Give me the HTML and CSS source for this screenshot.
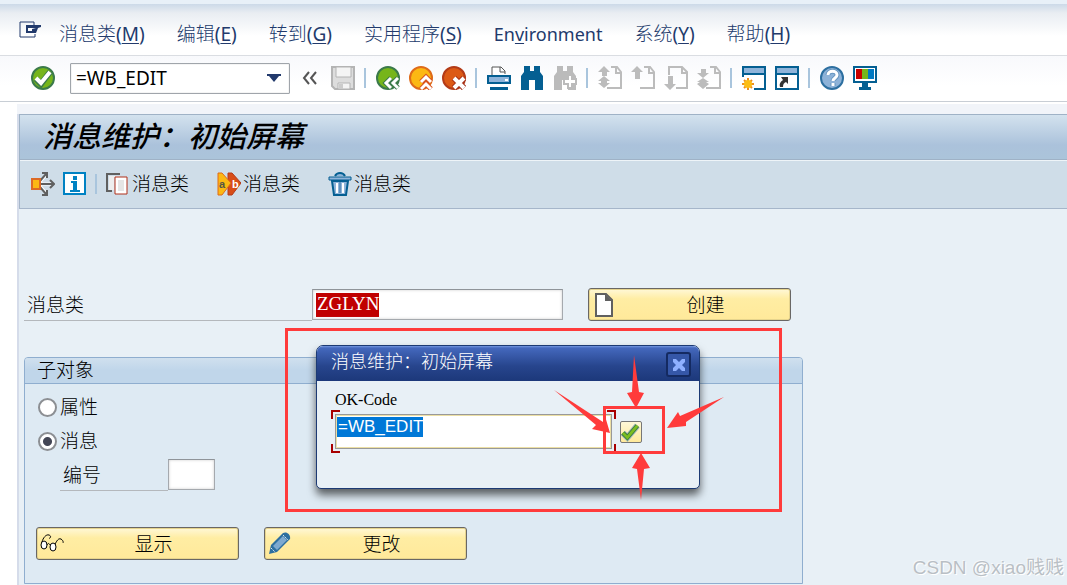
FILE: index.html
```html
<!DOCTYPE html>
<html lang="zh-CN">
<head>
	<meta charset="UTF-8">
	<title>消息维护：初始屏幕</title>
	<link rel="stylesheet" href="styles.css">
</head>
<body>
	<svg class="defs" width="0" height="0">
		<symbol id="page" viewBox="0 0 24 24"><path d="M13 1h6l4 5v16H9M18 1v6h5" fill="none" stroke="#bcbcbc" stroke-width="2"/></symbol>
		<symbol id="binoculars" viewBox="0 0 24 24"><path d="M4 0h6v5h4V0h6v6l3 4v14h-8V14H9v10H1V10l3-4z"/><path class="shine" d="M6 2h2v4H6zM16 2h2v4h-2zM5 8h5v4H7v10H3V11zM14 8h5l2 3v11h-2l-2-10h-3z"/></symbol>
	</svg>
	<div id="menu">
		<button class="sys" aria-label="菜单"><svg width="24" height="18" viewBox="0 0 24 18"><path d="M15 4V1H1v15h15v-3" fill="none" stroke="#223a6c" stroke-width="1"/><path d="M7 4h15v2l-3 1-2 5H7z" fill="#223a6c"/><path d="M9 7h8l-4 1v2H9z" fill="#fff"/></svg></button>
		<ul>
			<li><a href="#">消息类<span>(<u>M</u>)</span></a></li>
			<li><a href="#">编辑<span>(<u>E</u>)</span></a></li>
			<li><a href="#">转到<span>(<u>G</u>)</span></a></li>
			<li><a href="#">实用程序<span>(<u>S</u>)</span></a></li>
			<li><a href="#" class="en">En<u>v</u>ironment</a></li>
			<li><a href="#">系统<span>(<u>Y</u>)</span></a></li>
			<li><a href="#">帮助<span>(<u>H</u>)</span></a></li>
		</ul>
	</div>
	<div id="tool">
		<button class="enter" aria-label="回车"><svg viewBox="0 0 24 24"><circle cx="12" cy="12" r="11" fill="#76b51b" stroke="#3b7a4b" stroke-width="2"/><path d="M5 13l5 5 9-12" fill="none" stroke="#3b7a4b" stroke-width="6"/><path d="M5 12l5 5 9-11" fill="none" stroke="#fff" stroke-width="4"/></svg></button>
		<div class="combo">
			<input type="text" value="=WB_EDIT" aria-label="命令">
			<button aria-label="历史"><svg class="drop" viewBox="0 0 14 8"><path d="M0 0h14v2h-2L7 8 2 2H0z" fill="#223a6c"/></svg></button>
		</div>
		<button aria-label="收起"><svg viewBox="0 0 24 24"><path d="M11 6l-5 6 5 6M18 6l-5 6 5 6" fill="none" stroke="#555" stroke-width="2"/></svg></button>
		<button aria-label="保存"><svg viewBox="0 0 24 24"><path d="M1 1h22v22H4l-3-3z" fill="#ddd" stroke="#b4b4b4" stroke-width="2"/><path d="M5 1h15v10H5zM7 17h12v6H7z" fill="#f4f4f4" stroke="#b4b4b4" stroke-width="1"/><path d="M8 18h4v5H8z" fill="#ccc"/></svg></button>
		<i></i>
		<button aria-label="返回"><svg viewBox="0 0 24 24"><circle cx="12" cy="12" r="11" fill="#76b51b" stroke="#3b7a4b" stroke-width="2"/><path d="M15 12l-5 5 5 5M22 12l-5 5 5 5" fill="none" stroke="#3b7a4b" stroke-width="5"/><path d="M15 12l-5 5 5 5M22 12l-5 5 5 5" fill="none" stroke="#fff" stroke-width="3"/></svg></button>
		<button aria-label="退出"><svg viewBox="0 0 24 24"><circle cx="12" cy="12" r="11" fill="#fcb813" stroke="#df6b19" stroke-width="2"/><path d="M12 16l5-5 5 5M12 23l5-5 5 5" fill="none" stroke="#d9541e" stroke-width="5"/><path d="M12 16l5-5 5 5M12 23l5-5 5 5" fill="none" stroke="#fff" stroke-width="3"/></svg></button>
		<button aria-label="取消"><svg viewBox="0 0 24 24"><circle cx="12" cy="12" r="11" fill="#dc5a16" stroke="#b33b18" stroke-width="2"/><path d="M12 12l10 10M22 12L12 22" stroke="#a12a14" stroke-width="6"/><path d="M12 12l10 10M22 12L12 22" stroke="#fff" stroke-width="4"/></svg></button>
		<i></i>
		<button aria-label="打印"><svg viewBox="0 0 24 24"><path d="M5 9V1h9l4 4v3M13 1v5h5" fill="#fff" stroke="#555" stroke-width="1"/><path d="M1 10h22v7H1z" fill="#8fb4da" stroke="#045f92" stroke-width="2"/><path d="M18 13h3v2h-3z" fill="#fff"/><path d="M3 21h18v3H3z" fill="#045f92"/></svg></button>
		<button class="find" aria-label="查找"><svg viewBox="0 0 24 24"><use href="#binoculars"/></svg></button>
		<button class="find off" aria-label="查找下一个"><svg viewBox="0 0 24 24"><use href="#binoculars"/><path d="M15 9h4v4h4v5h-4v4h-4v-4h-4v-5h4z" fill="#fff" stroke="#bbb" stroke-width="2"/></svg></button>
		<i></i>
		<button aria-label="第一页"><svg viewBox="0 0 24 24"><use href="#page"/><path d="M6 0l6 6H9v4H4V6H0zM6 10l6 5H9v2h3l-6 5-6-5h3v-2H0z" fill="#bcbcbc"/></svg></button>
		<button aria-label="上一页"><svg viewBox="0 0 24 24"><use href="#page"/><path d="M6 0l6 6H9v7H4V6H0z" fill="#bcbcbc"/></svg></button>
		<button aria-label="下一页"><svg viewBox="0 0 24 24"><path d="M5 9V1h13l5 5v16H12M18 1v6h5" fill="none" stroke="#bcbcbc" stroke-width="2"/><path d="M6 24l6-6H9v-8H4v8H0z" fill="#bcbcbc"/></svg></button>
		<button aria-label="最后一页"><svg viewBox="0 0 24 24"><use href="#page"/><path d="M6 12l6-5H9V3H4v4H0zM6 12l6 4H9l3 2-6 5-6-5 3-2H0z" fill="#bcbcbc"/></svg></button>
		<i></i>
		<button aria-label="新建会话"><svg viewBox="0 0 24 24"><path d="M1 1h22v22H1z" fill="#fff" stroke="#045f92" stroke-width="2"/><path d="M2 2h20v5H2z" fill="#8fb4da"/><path d="M1 8h22" stroke="#045f92" stroke-width="2"/><path d="M0 11h12v13H0z" fill="#fff"/><path d="M6 12v12M0 18h12M2 14l8 8M10 14l-8 8" stroke="#ef8f1c" stroke-width="2"/><circle cx="6" cy="18" r="4" fill="#fcbd14"/></svg></button>
		<button aria-label="快捷方式"><svg viewBox="0 0 24 24"><path d="M1 1h22v22H1z" fill="#fff" stroke="#045f92" stroke-width="2"/><path d="M2 2h20v5H2z" fill="#8fb4da"/><path d="M1 8h22" stroke="#045f92" stroke-width="2"/><path d="M6 11h7v7l-2-2c-2 1-3 2-3 5H5c-1-3 0-5 3-7z" fill="#333"/></svg></button>
		<i></i>
		<button aria-label="帮助"><svg viewBox="0 0 24 24"><circle cx="12" cy="12" r="11" fill="#8db2d8" stroke="#2d6fa0" stroke-width="2"/><path d="M8 9c0-5 9-5 9 0 0 3-4 3-4 6M13 17v3" fill="none" stroke="#6796c0" stroke-width="5"/><path d="M8 9c0-5 9-5 9 0 0 3-4 3-4 6M13 17v3" fill="none" stroke="#fff" stroke-width="3"/></svg></button>
		<button aria-label="布局"><svg viewBox="0 0 24 24"><path d="M1 1h22v15H1z" fill="#fff" stroke="#045f92" stroke-width="2"/><path d="M3 3h6v10H3z" fill="#c80000"/><path d="M9 3h6v10H9z" fill="#76b51b"/><path d="M15 3h6v10h-6z" fill="#0079c2"/><path d="M9 17h6v4h3v3H6v-3h3z" fill="#045f92"/></svg></button>
	</div>
	<div id="screen">
		<h1>消息维护：初始屏幕</h1>
		<div id="app">
			<button aria-label="其他对象"><svg viewBox="0 0 24 24"><path d="M8 11l7-8M8 13l7 8M9 12h12" fill="none" stroke="#fff" stroke-width="3"/><path d="M9 9l6-7M11 1h5v5M9 15l6 7M11 23h5v-5M9 12h14M19 8l4 4-4 4" fill="none" stroke="#606060" stroke-width="2"/><path d="M1 7h8v10H1z" fill="#fcb813" stroke="#dc6a26" stroke-width="2"/></svg></button>
			<button aria-label="信息"><svg viewBox="0 0 24 24"><path d="M1 1h21v21H1z" fill="#fff" stroke="#0082c3" stroke-width="2"/><path d="M10 4h4v4h-4zM8 9h6v9h3v2H7v-2h3v-7H8z" fill="#0082c3"/></svg></button>
			<i></i>
			<button class="cls"><svg viewBox="0 0 24 24"><path d="M6 19H1V2h13" fill="none" stroke="#606060" stroke-width="2"/><path d="M3 4h11v2H8v12H3z" fill="#eee"/><path d="M9 5h12v17H9z" fill="#fff" stroke="#b0311b" stroke-width="1"/><path d="M12 8h6v11h-6z" fill="#e5e5e5"/></svg>消息类</button>
			<button class="cls"><svg viewBox="0 0 24 24"><path d="M11 1h4l9 10-9 12h-4z" fill="#d84d18" stroke="#b33b18"/><path d="M1 1h4l9 10-9 12H1z" fill="#fcb813" stroke="#df6b19"/><text x="2" y="16">a</text><text class="b" x="15" y="16">b</text></svg>消息类</button>
			<button class="cls"><svg viewBox="0 0 24 24"><path d="M7 4c2-4 8-4 10 0" fill="#8fb4da" stroke="#045f92" stroke-width="2"/><path d="M4 9h16l-2 14H6z" fill="#8fb4da" stroke="#045f92" stroke-width="2"/><path d="M9 11v10M15 11v10" stroke="#fff" stroke-width="2"/><path d="M12 10v11" stroke="#2d6fa0" stroke-width="1"/><path d="M1 5h22v3H1z" fill="#8fb4da" stroke="#045f92"/></svg>消息类</button>
		</div>
		<div id="content">
			<div class="row">
				<div class="field">
					<label for="msg">消息类</label>
					<input id="msg" class="msg" type="text" value="ZGLYN">
				</div>
				<button class="btn"><svg viewBox="0 0 24 24"><path d="M4 1h10l6 6v16H4z" fill="#fff" stroke="#606060" stroke-width="2"/><path d="M13 1v7h7z" fill="#606060"/></svg><span>创建</span></button>
			</div>
			<fieldset>
				<legend>子对象</legend>
				<label class="radio"><input type="radio" name="obj">属性</label>
				<label class="radio"><input type="radio" name="obj" checked>消息</label>
				<div class="field num">
					<label for="no">编号</label>
					<input id="no" type="text">
				</div>
				<div class="btns">
					<button class="btn"><svg viewBox="0 0 24 24"><ellipse cx="4" cy="13" rx="3" ry="4" fill="#fff" stroke="#000"/><ellipse cx="13" cy="15" rx="3" ry="4" fill="#fff" stroke="#000"/><path d="M2 10c1-4 4-8 7-7 3 1 1 4 0 3M7 13c1-2 2-2 3 0M15 12c2-3 3-6 6-5 3 2 2 4 2 4" fill="none" stroke="#000" stroke-width="1"/></svg><span>显示</span></button>
					<button class="btn"><svg viewBox="0 0 24 24"><path d="M1 22l2-9L15 1c4-2 8 2 7 6L9 20z" fill="#2d6fa0"/><path d="M5 14L15 4l4 4L9 18z" fill="#7da9d0"/><path d="M3 16l4 4M15 3l5 5" stroke="#d5e5f2" stroke-width="1" stroke-dasharray="2 1"/></svg><span>更改</span></button>
				</div>
			</fieldset>
		</div>
	</div>

	<div id="dialog" role="dialog" aria-labelledby="dtitle">
		<div class="head">
			<h2 id="dtitle">消息维护：初始屏幕</h2>
			<button class="close" aria-label="关闭"><svg viewBox="0 0 14 14"><path d="M1 1h3l3 3 3-3h3v3l-3 3 3 3v3h-3l-3-3-3 3H1v-3l3-3-3-3z" fill="#8fb0ff"/></svg></button>
		</div>
		<div class="body">
			<label for="ok">OK-Code</label>
			<div class="line">
				<div class="focus"><input id="ok" type="text" value="=WB_EDIT"></div>
				<button class="yes" aria-label="确定"><svg viewBox="0 0 22 22"><path d="M2 12l5 5L18 4" fill="none" stroke="#a9bdb9" stroke-width="7"/><path d="M2 12l5 5L18 4" fill="none" stroke="#397b3f" stroke-width="5"/><path d="M2 12l5 5L18 4" fill="none" stroke="#7cbd21" stroke-width="3"/></svg></button>
			</div>
		</div>
	</div>

	<!-- 红框和箭头 -->
	<svg id="mark" width="497" height="184" viewBox="285 328 497 184">
		<path d="M286.500 329.500h494v181h-494zM604.500 407.500h59v45h-59z" fill="none" stroke="#ff3b3b" stroke-width="3"/>
		<path d="M634 355l5 37 5 1-8 15-9-15 5-1zM641 500l-4-31-5-1 9-15 9 15-6 1zM554 390l49 32 2-6 5 17-18-4 4-4zM724 397l-38 25 0 4-19 2 11-16 2 4z" fill="#ff3b3b"/>
	</svg>
	<p id="author">CSDN @xiao贱贱</p>
</body>
</html>
```

FILE: styles.css
```css
*{margin: 0;padding: 0;box-sizing: border-box;}
li{list-style: none;}
body{
	position: relative;
	display: flex;
	flex-direction: column;
	min-height: 100vh;
	background: #fff;
	color: #000;
	font: 300 19px/26px "Noto Sans", "Noto Sans CJK SC", sans-serif;
}
button, input{font: inherit;color: inherit;}
button{background: none;border: none;}
input{border: 1px solid #a5a9ae;outline: none;background: #fff;}
svg{display: block;width: 24px;height: 24px;flex: none;}
.defs{position: absolute;width: 0;height: 0;}
i{
	width: 2px;
	height: 20px;
	background: #a9c5dd;
}

#menu{
	display: flex;
	align-items: center;
	height: 56px;
	padding: 8px 19px 0;
	border-top: 4px solid #e8f0f8;
	border-bottom: 1px solid #dadde2;
	background: linear-gradient(#ccd9e8, #e9edf2 9px, #fff 32px);
}
#menu .sys svg{width: 24px;height: 18px;margin-bottom: 8px;}
#menu ul{
	display: flex;
	gap: 32px;
	margin-left: 16px;
}
#menu a{
	color: #223a6c;
	text-decoration: none;
}
#menu span{font-weight: 400;}
#menu u{text-underline-offset: 2px;}
#menu .en{font-size: 18px;font-weight: 400;}

#tool{
	display: flex;
	align-items: center;
	gap: 9px;
	height: 46px;
	padding: 0 31px 1px;
	border-bottom: 1px solid #c8ced5;
	background: linear-gradient(#f8f9fc, #fff 30px);
}
#tool i{margin-right: 1px;}
#tool .enter{margin-right: 6px;}
.combo{
	display: flex;
	align-items: center;
	width: 220px;
	height: 31px;
	border: 1px solid #a0a5ab;
	border-radius: 1px;
	background: #fff;
	box-shadow: inset 0 0 1px #999;
	margin-right: -1px;
}
.combo input{
	flex: 1;
	width: 100px;
	border: none;
	background: none;
	padding-left: 5px;
	font-weight: 400;
}
.combo button{padding: 0 8px;}
.combo .drop{width: 14px;height: 8px;}
.find{fill: #045f92;}
.find .shine{fill: #8fb4da;}
.off{fill: #bbb;}
.off .shine{fill: #e4e4e4;}

#screen{
	flex: 1;
	margin: 12px 0 0 17px;
	border-left: 2px solid #d5dcea;
	background: #e8f0f6;
	box-shadow: 0 -10px 0 #f1f4f9;
}
#screen h1{
	height: 46px;
	padding-left: 23px;
	border: 1px solid #9fb2c6;
	border-width: 1px 0 1px 1px;
	background: linear-gradient(#d3e2ee, #abc2db 30px, #abc4da);
	font: italic 500 29px/38px "Noto Sans CJK SC", sans-serif;
}
#app{
	display: flex;
	align-items: center;
	height: 49px;
	padding-left: 11px;
	border: 1px solid #a6b6ca;
	border-width: 0 0 1px 1px;
	background: #cfdde8;
	box-shadow: inset 0 1px 0 #eef4f8;
}
#app button + button{margin-left: 8px;}
#app i{margin: 0 9px 0 8px;}
#app .cls{
	display: flex;
	align-items: center;
	gap: 2px;
}
#app .cls + .cls{margin-left: 28px;}
#app text{font: bold 11px "Liberation Sans", sans-serif;fill: #554;}
#app .b{fill: #fff;}

#content{padding: 79px 0 2px 5px;}
.row{
	display: flex;
	align-items: center;
	gap: 25px;
}
.field{display: flex;}
.field label{
	width: 288px;
	padding: 3px 3px 2px;
	border-bottom: 1px solid #b4b8bc;
}
.field input{
	width: 251px;
	height: 31px;
	padding-left: 4px;
	border-top-color: #8f9499;
	box-shadow: inset 0 0 3px #ccc;
}
.field label, .field input{min-height: 31px;}
.field .msg{
	background: linear-gradient(#c00000, #c00000) 3px 3px / 63px 24px no-repeat #fff;
	color: #fff;
	font: 19px "Liberation Serif", serif;
}
.btn{
	display: flex;
	align-items: center;
	width: 203px;
	height: 33px;
	padding: 0 3px;
	border: 1px solid #696765;
	border-radius: 3px;
	background: linear-gradient(#fff8d8, #ffeda3 10px, #ffe99a);
	box-shadow: inset 0 0 0 1px #e6d48d;
}
.btn span{flex: 1;padding-left: 8px;}
fieldset{
	display: flow-root;
	max-width: 779px;
	margin-top: 36px;
	border: 1px solid #8faecf;
	border-radius: 4px 4px 0 0;
	background: #deeaf3;
}
legend{
	float: left;
	width: 100%;
	height: 26px;
	padding-left: 12px;
	border-bottom: 1px solid #8faecf;
	border-radius: 3px 3px 0 0;
	background: linear-gradient(#d0e0ee, #c0d6ea 12px);
	line-height: 24px;
}
.radio{
	display: flex;
	align-items: center;
	gap: 3px;
	clear: both;
	margin: 0 0 8px 13px;
}
legend + .radio{padding-top: 10px;}
.radio input{
	appearance: none;
	width: 19px;
	height: 19px;
	border: 2px solid #8c8f93;
	border-radius: 50%;
}
.radio input:checked{background: radial-gradient(#434655 4px, #fff 5px);}
.num{margin: -3px 0 36px 35px;}
.num label{width: 108px;}
.num input{width: 47px;}
.btns{
	display: flex;
	gap: 25px;
	padding: 0 11px 23px;
}

#dialog{
	position: absolute;
	left: 316px;
	top: 345px;
	width: 384px;
	border: 1px solid #1c3a74;
	border-radius: 7px 7px 5px 5px;
	background: #e8f0f6;
	box-shadow: 0 6px 9px rgba(0,0,0,.6);
	overflow: hidden;
}
#dialog .head{
	display: flex;
	justify-content: space-between;
	height: 35px;
	padding: 2px 8px 0 14px;
	background: linear-gradient(#7597e0, #4468bd 2px, #27458d 20px, #1c387a);
	color: #fff;
}
#dialog h2{font-size: 18px;font-weight: 300;}
.close{
	display: flex;
	align-items: center;
	justify-content: center;
	width: 25px;
	height: 25px;
	margin-top: 4px;
	border: 2px solid #142a61;
	border-radius: 3px;
	background: #3557a8;
}
.close svg{width: 14px;height: 14px;}
#dialog .body{padding: 8px 14px 35px;}
#dialog label{
	display: block;
	padding-left: 4px;
	font: 16px/21px "Liberation Serif", serif;
}
.line{
	display: flex;
	align-items: center;
	gap: 4px;
}
/* 四个红角 */
.focus{
	--c: linear-gradient(#a80000, #a80000);
	padding: 4px;
	background: var(--c) 0 0 / 9px 2px, var(--c) 0 0 / 2px 9px,
		var(--c) 100% 0 / 9px 2px, var(--c) 100% 0 / 2px 9px,
		var(--c) 0 100% / 9px 2px, var(--c) 0 100% / 2px 9px,
		var(--c) 100% 100% / 9px 2px, var(--c) 100% 100% / 2px 9px;
	background-repeat: no-repeat;
}
.focus input{
	display: block;
	width: 277px;
	height: 35px;
	padding: 0 0 10px 2px;
	border-color: #999;
	background: linear-gradient(#0078d7, #0078d7) 1px 2px / 86px 20px no-repeat #fff;
	box-shadow: inset 0 0 0 1px #ecdfa4;
	color: #fff;
	font: 17px "Liberation Sans", sans-serif;
}
.yes{
	width: 22px;
	height: 22px;
	border: 1px solid #777;
	border-radius: 2px;
	background: linear-gradient(#fff8d8, #ffe99a);
}
.yes svg{width: 20px;height: 20px;}
#mark{
	position: absolute;
	left: 285px;
	top: 328px;
	width: 497px;
	height: 184px;
	pointer-events: none;
}
#author{
	position: absolute;
	right: 3px;
	bottom: 5px;
	color: #b9bfc5;
	font: 19px/26px "Liberation Sans", "Noto Sans CJK SC", sans-serif;
	text-shadow: 1px 1px 0 #fff, -1px -1px 0 #f4f7fa;
}
```
